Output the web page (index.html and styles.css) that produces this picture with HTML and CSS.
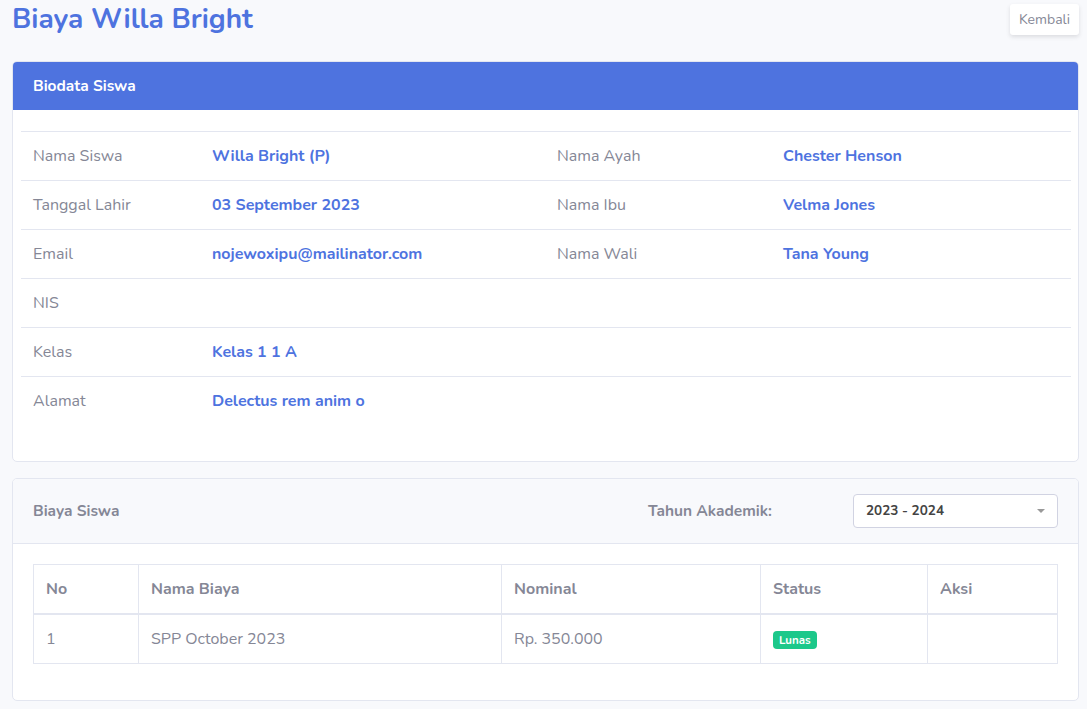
FILE: index.html
```html
<!DOCTYPE html>
<html lang="id">
<head>
<meta charset="utf-8">
<title>Biaya Willa Bright</title>
<link rel="stylesheet" href="styles.css">
</head>
<body>
<div class="page">
  <div class="page-head">
    <h3 class="page-title">Biaya Willa Bright</h3>
    <button class="btn-back">Kembali</button>
  </div>

  <div class="card">
    <div class="card-head blue">Biodata Siswa</div>
    <div class="card-body bio-body">
      <table class="bio">
        <colgroup>
          <col class="c1"><col class="c2"><col class="c3"><col class="c4">
        </colgroup>
        <tr><td class="lbl">Nama Siswa</td><td class="val">Willa Bright (P)</td><td class="lbl">Nama Ayah</td><td class="val">Chester Henson</td></tr>
        <tr><td class="lbl">Tanggal Lahir</td><td class="val">03 September 2023</td><td class="lbl">Nama Ibu</td><td class="val">Velma Jones</td></tr>
        <tr><td class="lbl">Email</td><td class="val">nojewoxipu@mailinator.com</td><td class="lbl">Nama Wali</td><td class="val">Tana Young</td></tr>
        <tr><td class="lbl">NIS</td><td class="val"></td><td></td><td></td></tr>
        <tr><td class="lbl">Kelas</td><td class="val">Kelas 1 1 A</td><td></td><td></td></tr>
        <tr><td class="lbl">Alamat</td><td class="val">Delectus rem anim o</td><td></td><td></td></tr>
      </table>
    </div>
  </div>

  <div class="card card2">
    <div class="card-head light">
      <span class="head-title">Biaya Siswa</span>
      <span class="year-label">Tahun Akademik:</span>
      <div class="select">
        <span>2023 - 2024</span>
        <span class="caret"></span>
      </div>
    </div>
    <div class="card-body">
      <table class="fees">
        <colgroup>
          <col class="f1"><col class="f2"><col class="f3"><col class="f4"><col class="f5">
        </colgroup>
        <thead>
          <tr><th>No</th><th>Nama Biaya</th><th>Nominal</th><th>Status</th><th>Aksi</th></tr>
        </thead>
        <tbody>
          <tr><td>1</td><td>SPP October 2023</td><td>Rp. 350.000</td><td><span class="badge">Lunas</span></td><td></td></tr>
        </tbody>
      </table>
    </div>
  </div>
</div>
</body>
</html>
```

FILE: styles.css
```css
* { box-sizing: border-box; }
html, body {
  margin: 0;
  background: #f8f9fc;
  font-family: "Nunito", "Lato", "Noto Sans", sans-serif;
  color: #858796;
  font-size: 16px;
  line-height: 1.5;
}
.page {
  padding: 4px 8px 10px 12px;
}
.page-head {
  display: flex;
  justify-content: space-between;
  align-items: flex-start;
  height: 57px;
}
.page-title {
  margin: 0;
  font-size: 28px;
  line-height: 30px;
  font-weight: 700;
  color: #4e73df;
}
.btn-back {
  font-family: inherit;
  font-size: 14px;
  line-height: 21px;
  padding: 5px 9px;
  color: #858796;
  background: #fff;
  border: none;
  border-radius: 3px;
  box-shadow: 0 2px 4px rgba(58, 59, 69, 0.15);
}
.card {
  background: #fff;
  border: 1px solid #e3e6f0;
  border-radius: 5px;
  overflow: hidden;
}
.card2 {
  margin-top: 16px;
}
.card-head {
  padding: 12px 20px;
  font-size: 15.5px;
  font-weight: 700;
  line-height: 24px;
}
.card-head.blue {
  background: #4e73df;
  color: #fff;
}
.card-head.light {
  background: #f8f9fc;
  border-bottom: 1px solid #e3e6f0;
  display: flex;
  align-items: center;
  padding: 15px 20px 15px 20px;
  color: #858796;
}
.head-title {
  flex: 1;
}
.year-label {
  width: 205px;
}
.select {
  width: 205px;
  height: 34px;
  border: 1px solid #d1d3e2;
  border-radius: 4px;
  background: #fff;
  display: flex;
  align-items: center;
  justify-content: space-between;
  padding: 0 12px;
  color: #444;
  font-size: 13.5px;
  font-weight: 700;
}
.caret {
  width: 0;
  height: 0;
  border-left: 4px solid transparent;
  border-right: 4px solid transparent;
  border-top: 4px solid #999;
}
.card-body {
  padding: 20px 20px 36px 20px;
}
.bio-body {
  padding: 21px 7px 35px 8px;
}
table {
  border-collapse: collapse;
  width: 100%;
}
.bio td {
  border-top: 1px solid #e3e6f0;
  padding: 12px 12px;
  height: 49px;
  vertical-align: top;
  font-size: 16px;
}
.bio .c1 { width: 179px; }
.bio .c2 { width: 345px; }
.bio .c3 { width: 226px; }
.bio .val {
  color: #4e73df;
  font-weight: 700;
}
.fees {
  border: 1px solid #e3e6f0;
}
.fees th, .fees td {
  border: 1px solid #e3e6f0;
  padding: 12px 12px;
  text-align: left;
  font-size: 16px;
  vertical-align: top;
}
.fees th {
  font-weight: 700;
  border-bottom-width: 2px;
}
.fees .f1 { width: 105px; }
.fees .f2 { width: 363px; }
.fees .f3 { width: 259px; }
.fees .f4 { width: 167px; }
.badge {
  display: inline-block;
  background: #1cc88a;
  color: #fff;
  font-size: 11.5px;
  font-weight: 700;
  line-height: 12px;
  padding: 3px 6px;
  border-radius: 4px;
  vertical-align: middle;
}
```
